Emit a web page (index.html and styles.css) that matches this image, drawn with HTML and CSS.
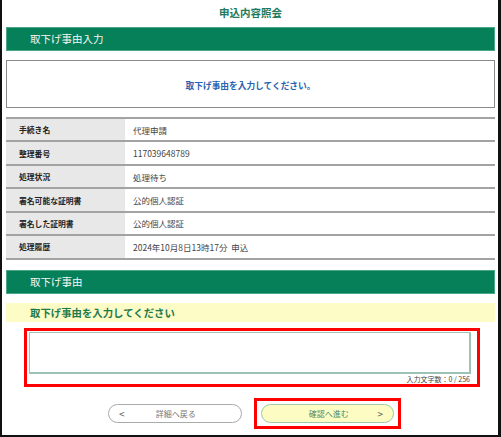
FILE: index.html
```html
<!DOCTYPE html>
<html lang="ja">
<head>
<meta charset="utf-8">
<link rel="stylesheet" href="styles.css">
</head>
<body>
<div class="frame">
  <h1 class="title">申込内容照会</h1>
  <div class="bar">取下げ事由入力</div>
  <div class="notice">取下げ事由を入力してください。</div>
  <div class="table">
    <div class="row"><div class="label">手続き名</div><div class="value">代理申請</div></div>
    <div class="row"><div class="label">整理番号</div><div class="value">117039648789</div></div>
    <div class="row"><div class="label">処理状況</div><div class="value">処理待ち</div></div>
    <div class="row"><div class="label">署名可能な証明書</div><div class="value">公的個人認証</div></div>
    <div class="row"><div class="label">署名した証明書</div><div class="value">公的個人認証</div></div>
    <div class="row"><div class="label">処理履歴</div><div class="value">2024年10月8日13時17分&nbsp;&nbsp;申込</div></div>
  </div>
  <div class="bar bar-second">取下げ事由</div>
  <div class="prompt">取下げ事由を入力してください</div>
  <div class="highlight input-box">
    <textarea class="reason"></textarea>
    <div class="counter">入力文字数：0 / 256</div>
  </div>
  <div class="buttons">
    <button class="btn btn-back"><span class="arrow">&lt;</span><span class="btn-text">詳細へ戻る</span></button>
    <div class="highlight btn-wrap">
      <button class="btn btn-next"><span class="btn-text">確認へ進む</span><span class="arrow">&gt;</span></button>
    </div>
  </div>
</div>
</body>
</html>
```

FILE: styles.css
```css
html, body {
  margin: 0;
  padding: 0;
  background: #ffffff;
}
body {
  font-family: "Noto Sans CJK JP", "Noto Sans", sans-serif;
}
.frame {
  box-sizing: border-box;
  width: 501px;
  height: 437px;
  border-left: 2px solid #111;
  border-right: 3px solid #111;
  border-bottom: 2px solid #111;
  padding: 0 3px 0 4px;
  overflow: hidden;
}
.title {
  margin: 0;
  height: 27px;
  line-height: 25px;
  font-size: 10.5px;
  font-weight: bold;
  color: #1f7a5c;
  text-align: center;
}
.bar {
  box-sizing: border-box;
  height: 24px;
  background: #058059;
  border: 1px solid #4aa684;
  color: #f4f4f4;
  font-size: 10.5px;
  line-height: 21px;
  padding-left: 23px;
}
.notice {
  box-sizing: border-box;
  margin-top: 9px;
  height: 48px;
  border: 1px solid #8a8a8a;
  display: flex;
  align-items: center;
  justify-content: center;
  font-size: 8.7px;
  font-weight: bold;
  color: #2a62b0;
  padding-top: 2px;
}
.table {
  margin-top: 9px;
  border-top: 2px solid #a3a3a3;
}
.row {
  display: flex;
  height: 21.45px;
  border-bottom: 2px solid #a3a3a3;
  font-size: 8.5px;
}
.label {
  width: 119px;
  background: #e8e8e8;
  font-weight: bold;
  font-size: 7.8px;
  color: #222;
  padding-left: 13px;
  box-sizing: border-box;
  display: flex;
  align-items: center;
}
.value {
  flex: 1;
  padding-left: 8px;
  color: #444;
  display: flex;
  align-items: center;
}
.bar-second {
  margin-top: 10px;
}
.prompt {
  margin-top: 9px;
  height: 19px;
  background: #fdfcc6;
  color: #1f7a4c;
  font-size: 10.4px;
  font-weight: bold;
  line-height: 19px;
  padding-left: 24px;
}
.highlight {
  border: 3px solid #ff0000;
  box-sizing: border-box;
}
.input-box {
  margin: 6px 15px 0 18px;
  padding: 1px 6px 0 2px;
  height: 59px;
}
.reason {
  display: block;
  box-sizing: border-box;
  width: 100%;
  height: 42px;
  margin: 0;
  border: 1px solid #9dc2b6;
  border-width: 1px 2px 2px 1px;
  resize: none;
  background: #fff;
}
.counter {
  text-align: right;
  font-size: 7px;
  color: #444;
  line-height: 11px;
  padding-right: 1px;
}
.buttons {
  margin-top: 11px;
  display: flex;
  justify-content: center;
  align-items: center;
  gap: 12px;
  padding-left: 8px;
}
.btn {
  box-sizing: border-box;
  height: 19px;
  border-radius: 10px;
  display: flex;
  align-items: center;
  font-family: "Noto Sans CJK JP", "Noto Sans", sans-serif;
  font-size: 8px;
  padding: 0 10px;
  margin: 0;
}
.btn-back {
  width: 134px;
  background: #ffffff;
  border: 1px solid #aaaaaa;
  color: #777;
}
.btn-back .btn-text {
  flex: 1;
  text-align: center;
  padding-right: 4px;
}
.btn-wrap {
  padding: 3px 4px;
}
.btn-next {
  width: 133px;
  background: #fdfcc2;
  border: 1px solid #9fc9a6;
  color: #4f8a6a;
}
.btn-next .btn-text {
  flex: 1;
  text-align: center;
  padding-left: 8px;
}
.arrow {
  font-size: 10px;
  color: #555;
}
```
